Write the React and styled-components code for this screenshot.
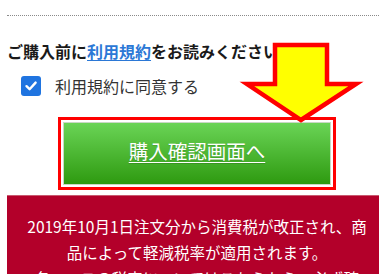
import React from 'react'
import styled, { createGlobalStyle } from 'styled-components'

const GlobalStyle = createGlobalStyle`
  html, body {
    margin: 0;
    padding: 0;
    background: #fff;
    overflow: hidden;
  }
  body {
    font-family: "Noto Sans CJK JP", "Noto Sans", sans-serif;
  }
`

const Page = styled.div`
  position: relative;
  width: 380px;
  margin-left: 7px;
  padding-top: 15px;
`

const Divider = styled.hr`
  margin: 0;
  border: 0;
  border-top: 1px dotted #8a8a8a;
`

const Heading = styled.p`
  margin: 23px 0 0;
  font-size: 16px;
  line-height: 24px;
  font-weight: bold;
  color: #1a1a1a;

  a {
    color: #2b78d6;
    text-decoration: underline;
    text-underline-offset: 2px;
  }
`

const CheckRow = styled.label`
  display: flex;
  align-items: center;
  gap: 14px;
  margin: 13px 0 0 14px;
  font-size: 16px;
  line-height: 20px;
  color: #333;
`

const CheckBox = styled.span`
  display: flex;
  align-items: center;
  justify-content: center;
  width: 20px;
  height: 20px;
  border-radius: 3px;
  background: #1f74e0;
`

const Frame = styled.div`
  box-sizing: border-box;
  width: 278px;
  height: 73px;
  margin: 21px 0 0 51px;
  border: 3px solid #ff0000;
  padding: 2px;
`

const BuyButton = styled.button`
  display: flex;
  align-items: center;
  justify-content: center;
  width: 100%;
  height: 100%;
  border: 1px solid #c9d8c4;
  background: linear-gradient(#6ad456, #2e9a10);
  color: #fff;
  font-family: inherit;
  font-size: 19.5px;
  text-decoration: underline;
  text-decoration-thickness: 1px;
  text-underline-offset: 3px;
  text-shadow: 0 1px 1px rgba(0, 0, 0, 0.15);
  padding: 0 0 6px;
  cursor: pointer;
`

const Notice = styled.div`
  margin-top: 5px;
  padding: 17px 10px 20px;
  background: #b3002a;
  border-top: 1px solid #c9596f;
  color: #fff;
  font-size: 15.5px;
  line-height: 26px;
  text-align: center;
`

const Arrow = styled.svg`
  position: absolute;
  left: 228px;
  top: 39px;
  width: 130px;
  height: 90px;
  overflow: visible;
`

const App = () => {
  return (
    <>
      <GlobalStyle />
      <Page>
        <Divider />
        <Heading>
          ご購入前に<a href="#terms">利用規約</a>をお読みください。
        </Heading>
        <CheckRow>
          <CheckBox>
            <svg width="14" height="14" viewBox="0 0 14 14">
              <path d="M2.5 7.2 L5.6 10.2 L11.6 3.6" fill="none" stroke="#fff" strokeWidth="2.4" strokeLinecap="round" strokeLinejoin="round" />
            </svg>
          </CheckBox>
          利用規約に同意する
        </CheckRow>
        <Frame>
          <BuyButton>購入確認画面へ</BuyButton>
        </Frame>
        <Notice>
          2019年10月1日注文分から消費税が改正され、商<br />
          品によって軽減税率が適用されます。<br />
          各コースの税率についてはこちらから、必ず確<br />
          認してください。
        </Notice>
        <Arrow viewBox="228 39 130 90">
          <polygon
            points="268,45 320,45 320,84 349,84 294,120 240,84 268,84"
            fill="#ffff00"
            stroke="#ff0000"
            strokeWidth="4.5"
            strokeLinejoin="miter"
          />
        </Arrow>
      </Page>
    </>
  )
}

export default App
